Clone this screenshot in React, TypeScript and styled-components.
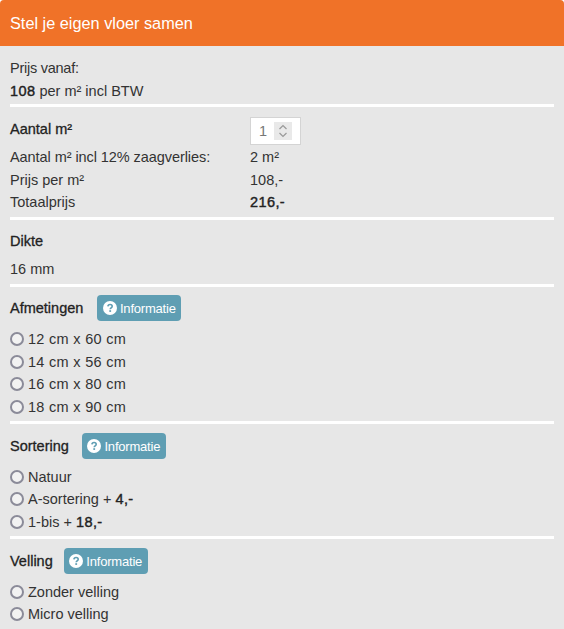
import React from "react";
import styled, { createGlobalStyle } from "styled-components";

const Global = createGlobalStyle`
  html, body { margin: 0; padding: 0; background: #fff; }
  body { font-family: "Liberation Sans", Arial, sans-serif; font-size: 14.5px; color: #333; overflow: hidden; }
`;
const Panel = styled.div`
  width: 564px; height: 629px; overflow: hidden; background: #e7e7e7;
  border-radius: 4px 4px 0 0;
`;
const Header = styled.div`
  height: 46px; background: #f07228; color: #fff; font-size: 16.3px;
  display: flex; align-items: center; padding-left: 10px; box-sizing: border-box;
`;
const Body = styled.div`
  padding: 11px 10px 0 10px;
`;
const Line = styled.div<{ $top?: number }>`
  height: 22.5px; line-height: 22.5px; white-space: nowrap;
  margin-top: ${(p) => p.$top ?? 0}px;
`;
const Rule = styled.div<{ $before?: number; $after?: number }>`
  height: 3px; background: #fff;
  margin-top: ${(p) => p.$before ?? 0}px;
  margin-bottom: ${(p) => p.$after ?? 0}px;
`;
const Strong = styled.span`
  color: #222; -webkit-text-stroke: 0.4px #222; letter-spacing: 0.4px;
`;
const Tight = styled.span<{ $spacing: number }>`
  letter-spacing: ${(p) => p.$spacing}px;
`;
const Heading = styled.div`
  font-weight: 400; color: #222; -webkit-text-stroke: 0.3px #222; line-height: 22.5px;
`;
const QtyHeading = styled(Heading)`
  line-height: 24.5px;
`;
const QtyRow = styled.div`
  display: grid; grid-template-columns: 240px 51px; height: 28px; margin-top: 10px; margin-bottom: 1px;
`;
const QtyBox = styled.div`
  box-sizing: border-box; width: 51px; height: 28px; background: #fff; border: 1px solid #d4d4d4;
  display: flex; align-items: center; padding-left: 8px; gap: 7px; color: #777;
`;
const Stepper = styled.div`
  width: 18px; height: 18px; background: #e9e9e9; display: flex; align-items: center; justify-content: center;
`;
const Grid = styled.div`
  display: grid; grid-template-columns: 240px 1fr; grid-auto-rows: 22.5px; line-height: 22.5px;
`;
const TitleRow = styled.div<{ $gap: number; $bottom?: number }>`
  display: flex; align-items: center; gap: ${(p) => p.$gap}px; height: 26px;
  margin-bottom: ${(p) => p.$bottom ?? 6.5}px;
`;
const InfoButton = styled.div`
  box-sizing: border-box; width: 84px; height: 26px; background: #5f9eb3; border-radius: 4px; color: #fff;
  display: flex; align-items: center; justify-content: center; gap: 3px; font-size: 13px; letter-spacing: -0.2px;
`;
const Radio = styled.span`
  box-sizing: border-box; width: 14px; height: 14px; border-radius: 50%; border: 2px solid #8b8b99;
  background: #f2f2f2; flex: none;
`;
const Option = styled.div`
  display: flex; align-items: center; gap: 4px; height: 22.5px; white-space: nowrap;
`;
const Sized = styled.span`
  letter-spacing: 0.3px;
`;

function Info() {
  return (
    <InfoButton>
      <svg width="14" height="14" viewBox="0 0 14 14" aria-hidden="true">
        <circle cx="7" cy="7" r="7" fill="#fff" />
        <path d="M4.9 5.4C5 4.2 5.9 3.5 7.1 3.5c1.2 0 2.1.7 2.1 1.8 0 1.6-2 1.6-2 3" fill="none" stroke="#5f9eb3" strokeWidth="1.6" />
        <rect x="6.3" y="9.2" width="1.8" height="1.7" fill="#5f9eb3" />
      </svg>
      Informatie
    </InfoButton>
  );
}

function Options({ items }: { items: React.ReactNode[] }) {
  return (
    <>
      {items.map((it, i) => (
        <Option key={i}>
          <Radio />
          <span>{it}</span>
        </Option>
      ))}
    </>
  );
}

export default function App() {
  return (
    <Panel>
      <Global />
      <Header>Stel je eigen vloer samen</Header>
      <Body>
        <Line><Tight $spacing={-0.25}>Prijs vanaf:</Tight></Line>
        <Line><Strong>108</Strong> per m² incl BTW</Line>
        <Rule $before={2} />
        <QtyRow>
          <QtyHeading>Aantal m²</QtyHeading>
          <QtyBox>
            1
            <Stepper>
              <svg width="10" height="16" viewBox="0 0 10 16" fill="none" stroke="#999" strokeWidth="1.2" aria-hidden="true">
                <path d="M1.5 6L5 2.5 8.5 6M1.5 10L5 13.5 8.5 10" />
              </svg>
            </Stepper>
          </QtyBox>
        </QtyRow>
        <Grid>
          <Tight $spacing={-0.07}>Aantal m² incl 12% zaagverlies:</Tight><span>2 m²</span>
          <span>Prijs per m²</span><span>108,-</span>
          <span>Totaalprijs</span><Strong>216,-</Strong>
        </Grid>
        <Rule $before={3} $after={10} />
        <Heading>Dikte</Heading>
        <Line $top={6}>16 mm</Line>
        <Rule $before={3} $after={8.5} />
        <TitleRow $gap={14} $bottom={7}><Heading>Afmetingen</Heading><Info /></TitleRow>
        <Options items={[<Sized>12 cm x 60 cm</Sized>, <Sized>14 cm x 56 cm</Sized>, <Sized>16 cm x 80 cm</Sized>, <Sized>18 cm x 90 cm</Sized>]} />
        <Rule $before={3} $after={9} />
        <TitleRow $gap={13}><Heading>Sortering</Heading><Info /></TitleRow>
        <Options items={["Natuur", <>A-sortering + <Strong>4,-</Strong></>, <>1-bis + <Strong>18,-</Strong></>]} />
        <Rule $before={3} $after={9} />
        <TitleRow $gap={11}><Heading>Velling</Heading><Info /></TitleRow>
        <Options items={["Zonder velling", "Micro velling"]} />
        <Rule $before={3} />
      </Body>
    </Panel>
  );
}
